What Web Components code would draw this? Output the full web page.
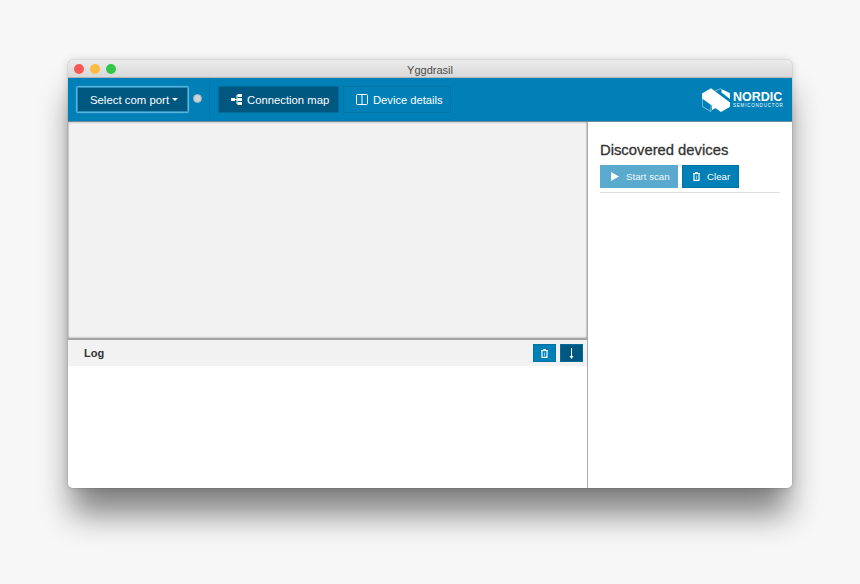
<!DOCTYPE html>
<html>
<head>
<meta charset="utf-8">
<title>Yggdrasil</title>
<style>
  html, body { margin: 0; height: 100%; }
  body {
    background: #f7f7f7;
    padding: 60px 68px 0;
    box-sizing: border-box;
    overflow: hidden;
    font-family: "Liberation Sans", Arial, sans-serif;
  }
</style>
</head>
<body>
<app-window title-text="Yggdrasil">
  <app-toolbar></app-toolbar>
  <main-area></main-area>
</app-window>

<script>
// icons used by the buttons
const ICONS = {
  map: '<svg width="12" height="13" viewBox="0 0 12 13" fill="#fff"><rect x="0" y="5" width="4" height="3"/><rect x="6.500" y="1" width="4.500" height="3"/><rect x="6.500" y="5" width="4.500" height="3"/><rect x="6.500" y="9" width="4.500" height="3"/><path d="M4 6h3v1H4zM5.500 2h1v9h-1z"/></svg>',
  book: '<svg width="12" height="11" viewBox="0 0 12 11" fill="none" stroke="#fff" stroke-width="1"><rect x="0.500" y="0.500" width="11" height="10" rx="1"/><path d="M6 0.500v10"/></svg>',
  play: '<svg width="8" height="9" viewBox="0 0 8 9" fill="#fff"><path d="M0 0L8 4.500L0 9Z"/></svg>',
  trash: '<svg width="7" height="9" viewBox="0 0 7 9" fill="none" stroke="#fff" stroke-width="1.200"><path d="M0 1.600h7" stroke-width="1"/><path d="M2.500 1.500V0.500h2v1" stroke-width="1"/><path d="M1 2v6.400h5V2"/><path d="M3.500 3.500v3.500" stroke-width="0.600"/></svg>',
  down: '<svg width="7" height="11" viewBox="0 0 7 11" fill="#fff"><path d="M3 0h1v8h1.500L3.500 11L1.500 8H3z"/></svg>'
};

class AppWindow extends HTMLElement {
  constructor() {
    super();
    const shadow = this.attachShadow({mode: 'open'});
    shadow.innerHTML = `
      <style>
        :host {
          display: flex;
          flex-direction: column;
          width: 724px;
          height: 428px;
          border-radius: 5px;
          overflow: hidden;
          background: #fff;
          box-shadow: 0 30px 32px -4px rgba(0,0,0,0.48), 0 0 8px rgba(0,0,0,0.16), 0 0 1px rgba(0,0,0,0.5);
        }
        .bar {
          flex: none;
          box-sizing: border-box;
          height: 18px;
          background: linear-gradient(#ececec, #d8d8d8);
          border-bottom: 1px solid #b4b4b4;
          display: flex;
          align-items: center;
          justify-content: center;
          position: relative;
          font-size: 11px;
          color: #4d4d4d;
          padding-top: 2px;
        }
        .lights {
          position: absolute;
          left: 6px;
          top: 4px;
          display: flex;
          gap: 6px;
        }
        .lights i { width: 10px; height: 10px; border-radius: 50%; display: block; }
        .content { flex: 1; display: flex; flex-direction: column; min-height: 0; }
      </style>
      <div class="bar">
        <div class="lights">
          <i style="background:#fc5753"></i><i style="background:#fdbc40"></i><i style="background:#33c748"></i>
        </div>
        <span>${this.getAttribute('title-text')}</span>
      </div>
      <div class="content"><slot></slot></div>
    `;
  }
}

class ToolButton extends HTMLElement {
  constructor() {
    super();
    const shadow = this.attachShadow({mode: 'open'});
    const icon = ICONS[this.getAttribute('icon')] || '';
    shadow.innerHTML = `
      <style>
        :host {
          display: inline-flex;
          align-items: center;
          justify-content: center;
          box-sizing: border-box;
          height: 27px;
          gap: 6px;
          color: #fff;
          font-size: 11px;
          background: #0080b7;
          border: 1px solid #0073a5;
          white-space: nowrap;
        }
        :host([kind="active"]) { background: #00577f; border-color: #006d9c; }
        :host([kind="disabled"]) { background: #59aacd; border-color: #59aacd; color: #f0f7fa; }
        svg { display: block; }
        .icon { display: flex; }
      </style>
      <span class="icon">${icon}</span><slot></slot>
    `;
  }
}

class AppToolbar extends HTMLElement {
  constructor() {
    super();
    const shadow = this.attachShadow({mode: 'open'});
    shadow.innerHTML = `
      <style>
        :host {
          flex: none;
          display: flex;
          align-items: center;
          box-sizing: border-box;
          height: 44px;
          background: #0080b7;
          border-bottom: 1px solid #6d8c9a;
          color: #fff;
        }
        .port {
          display: flex;
          align-items: center;
          gap: 4px;
          width: 142px;
          height: 43px;
          box-sizing: border-box;
          padding-left: 8px;
          border-right: 1px solid #0075a8;
          flex: none;
        }
        .select {
          box-sizing: border-box;
          width: 113px;
          height: 27px;
          background: #00577f;
          border: 1px solid #5ab4dc;
          box-shadow: inset 0 0 0 1px #2a8fbb, 0 0 1px #5ab4dc;
          border-radius: 2px;
          font-size: 11.400px;
          display: flex;
          align-items: center;
          justify-content: center;
          gap: 3px;
          padding-left: 3px;
        }
        .caret {
          width: 0; height: 0;
          border-left: 3px solid transparent;
          border-right: 3px solid transparent;
          border-top: 3px solid #fff;
        }
        .led {
          box-sizing: border-box;
          width: 9px; height: 9px;
          background: #cfd2d4;
          border: 1px solid #9db4bf;
          border-radius: 50%;
          margin-bottom: 2px;
        }
        .tabs { display: flex; gap: 4px; padding-left: 8px; }
        tool-button { justify-content: flex-start; padding-left: 12px; }
        .tab1 { width: 121px; gap: 4px; font-size: 11.300px; }
        .tab2 { width: 108px; gap: 5px; font-size: 11.200px; }
        .logo {
          margin-left: auto;
          margin-right: 10px;
          display: flex;
          align-items: center;
          gap: 3px;
        }
        .words { display: flex; flex-direction: column; align-items: flex-start; width: 49px; }
        .nordic {
          font: bold 13px/12px "Liberation Sans", Arial, sans-serif;
          transform: scaleX(0.96);
          transform-origin: left;
        }
        .semi {
          font: 4.500px/6px "Liberation Sans", Arial, sans-serif;
          letter-spacing: 0.800px;
          white-space: nowrap;
        }
      </style>
      <div class="port">
        <div class="select">Select com port <span class="caret"></span></div>
        <div class="led"></div>
      </div>
      <div class="tabs">
        <tool-button class="tab1" icon="map" kind="active">Connection map</tool-button>
        <tool-button class="tab2" icon="book">Device details</tool-button>
      </div>
      <div class="logo">
        <svg width="28" height="24" viewBox="0 0 28 24">
          <path d="M0.300 11V18.500L9 23.500V16.500" fill="none" stroke="#fff" stroke-width="0.500"/>
          <path d="M12 3.500L19 0.500" fill="none" stroke="#fff" stroke-width="0.500"/>
          <path d="M0 5.500L9 0.300L28 14.500V18.700L19 24L0 10.500Z" fill="#fff"/>
          <path d="M10 15.500L15 19.200L10 22Z" fill="#fff"/>
          <path d="M19.500 1L28 5.200V11L19.500 4.500Z" fill="#fff"/>
        </svg>
        <div class="words">
          <span class="nordic">NORDIC</span>
          <span class="semi">SEMICONDUCTOR</span>
        </div>
      </div>
    `;
  }
}

class MainArea extends HTMLElement {
  constructor() {
    super();
    const shadow = this.attachShadow({mode: 'open'});
    shadow.innerHTML = `
      <style>
        :host { flex: 1; display: flex; min-height: 0; background: #fff; }
        .left { width: 519px; flex: none; display: flex; flex-direction: column; border-right: 1px solid #aaa; }
        .graph {
          flex: none;
          height: 218px;
          background: #f2f2f2;
          box-shadow: inset 0 1px 2px rgba(0,0,0,0.14), inset 0 -1px 2px rgba(0,0,0,0.14), inset 1px 0 1px rgba(0,0,0,0.1), inset -1px 0 1px rgba(0,0,0,0.1);
          border-bottom: 2px solid #a5a5a5;
          box-sizing: border-box;
        }
        .right { flex: 1; min-width: 0; }
      </style>
      <div class="left">
        <div class="graph"></div>
        <log-panel></log-panel>
      </div>
      <div class="right"><device-panel></device-panel></div>
    `;
  }
}

class LogPanel extends HTMLElement {
  constructor() {
    super();
    const shadow = this.attachShadow({mode: 'open'});
    shadow.innerHTML = `
      <style>
        :host { display: block; }
        .head {
          height: 26px;
          background: #f2f2f2;
          display: flex;
          align-items: center;
          padding: 0 4px 0 16px;
        }
        b { font-size: 11px; color: #333; flex: 1; }
        .btns { display: flex; gap: 4px; }
        tool-button { width: 23px; height: 18px; }
      </style>
      <div class="head">
        <b>Log</b>
        <div class="btns">
          <tool-button icon="trash"></tool-button>
          <tool-button icon="down" kind="active"></tool-button>
        </div>
      </div>
    `;
  }
}

class DevicePanel extends HTMLElement {
  constructor() {
    super();
    const shadow = this.attachShadow({mode: 'open'});
    shadow.innerHTML = `
      <style>
        :host { display: block; padding: 20px 12px 0 12px; }
        h4 {
          margin: 0 0 7px;
          font-size: 14.800px;
          line-height: 16px;
          font-weight: normal;
          color: #333;
          -webkit-text-stroke: 0.300px #333;
        }
        .btns {
          display: flex;
          gap: 4px;
          padding-bottom: 4px;
          border-bottom: 1px solid #ddd;
        }
        tool-button { height: 23px; font-size: 9.700px; justify-content: flex-start; }
        .scan { width: 78px; padding-left: 10px; gap: 7px; }
        .clear { width: 57px; padding-left: 10px; gap: 7px; }
      </style>
      <h4>Discovered devices</h4>
      <div class="btns">
        <tool-button class="scan" icon="play" kind="disabled">Start scan</tool-button>
        <tool-button class="clear" icon="trash">Clear</tool-button>
      </div>
    `;
  }
}

customElements.define('tool-button', ToolButton);
customElements.define('app-window', AppWindow);
customElements.define('app-toolbar', AppToolbar);
customElements.define('main-area', MainArea);
customElements.define('log-panel', LogPanel);
customElements.define('device-panel', DevicePanel);
</script>
</body>
</html>
